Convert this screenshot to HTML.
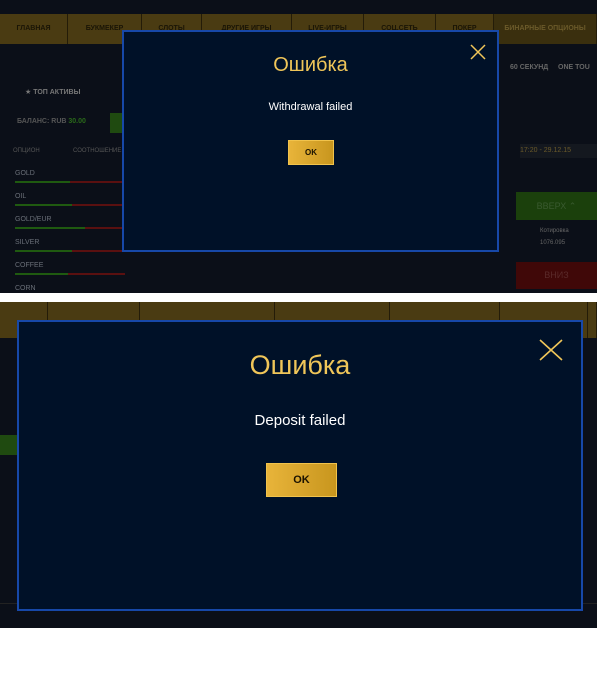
<!DOCTYPE html>
<html><head><meta charset="utf-8"><style>
*{margin:0;padding:0;box-sizing:border-box}
body{width:612px;height:673px;background:#fff;position:relative;overflow:hidden;font-family:"Liberation Sans","DejaVu Sans",sans-serif}
.shot{position:absolute;left:0;width:597px;background:#0b0f18;overflow:hidden}
.nav{position:absolute;left:0;right:0;background:#4a3b12;display:flex}
.nav div{border-right:1px solid #241c08;color:#1a1506;font-size:7px;font-weight:bold;text-align:center}
.abs{position:absolute}
.modal{position:absolute;background:#001128;border:2px solid #1748a8}
.title{position:absolute;left:0;right:0;text-align:center;color:#f0c659}
.msg{position:absolute;left:0;right:0;text-align:center;color:#fff}
.ok{position:absolute;background:linear-gradient(90deg,#e8b43a,#c8961e);border:1px solid #f1c34c;color:#1a1200;font-weight:bold;text-align:center}
.x{position:absolute}
.row{position:absolute;left:15px;width:110px;color:#6a6f78;font-size:7px}
</style></head><body>

<div class="shot" style="top:0;height:293px">
  <div class="nav" style="top:14px;height:30px">
    <div style="width:68px;line-height:30px">ГЛАВНАЯ</div>
    <div style="width:74px;line-height:30px">БУКМЕКЕР</div>
    <div style="width:60px;line-height:30px">СЛОТЫ</div>
    <div style="width:90px;line-height:30px">ДРУГИЕ ИГРЫ</div>
    <div style="width:72px;line-height:30px">LIVE-ИГРЫ</div>
    <div style="width:72px;line-height:30px">СОЦ.СЕТЬ</div>
    <div style="width:58px;line-height:30px">ПОКЕР</div>
    <div style="flex:1;line-height:30px;background:#3a2f0e;color:#6b5a2a">БИНАРНЫЕ ОПЦИОНЫ</div>
  </div>
  <div class="abs" style="left:25px;top:88px;color:#777;font-size:7px;font-weight:bold">★ ТОП АКТИВЫ</div>
  <div class="abs" style="left:17px;top:118px;color:#555;font-size:7px;font-weight:bold">БАЛАНС: RUB <span style="color:#2a6a1a">30.00</span></div>
  <div class="abs" style="left:110px;top:113px;width:15px;height:20px;background:#1f4a10"></div>
  <div class="abs" style="left:13px;top:148px;color:#555;font-size:6px">ОПЦИОН</div>
  <div class="abs" style="left:73px;top:148px;color:#555;font-size:6px">СООТНОШЕНИЕ, %</div>
  <div class="row" style="top:170px">GOLD<div style="position:absolute;top:11px;left:0;width:55px;height:2px;background:#1f5a10"></div><div style="position:absolute;top:11px;left:55px;width:55px;height:2px;background:#5a1010"></div></div>
  <div class="row" style="top:193px">OIL<div style="position:absolute;top:11px;left:0;width:57px;height:2px;background:#1f5a10"></div><div style="position:absolute;top:11px;left:57px;width:53px;height:2px;background:#5a1010"></div></div>
  <div class="row" style="top:216px">GOLD/EUR<div style="position:absolute;top:11px;left:0;width:70px;height:2px;background:#1f5a10"></div><div style="position:absolute;top:11px;left:70px;width:40px;height:2px;background:#5a1010"></div></div>
  <div class="row" style="top:239px">SILVER<div style="position:absolute;top:11px;left:0;width:57px;height:2px;background:#1f5a10"></div><div style="position:absolute;top:11px;left:57px;width:53px;height:2px;background:#5a1010"></div></div>
  <div class="row" style="top:262px">COFFEE<div style="position:absolute;top:11px;left:0;width:53px;height:2px;background:#1f5a10"></div><div style="position:absolute;top:11px;left:53px;width:57px;height:2px;background:#5a1010"></div></div>
  <div class="row" style="top:285px">CORN</div>
  <div class="abs" style="left:510px;top:64px;color:#666;font-size:7px;font-weight:bold">60 СЕКУНД &nbsp;&nbsp;&nbsp; ONE TOU</div>
  <div class="abs" style="left:520px;top:144px;width:77px;height:14px;background:#14181f;color:#6b5a2a;font-size:7px;line-height:14px">17:20 - 29.12.15</div>
  <div class="abs" style="left:516px;top:192px;width:81px;height:28px;background:#1b400c;color:#3a5a30;font-size:9px;line-height:28px;text-align:center">ВВЕРХ ⌃</div>
  <div class="abs" style="left:516px;top:262px;width:81px;height:27px;background:#400808;color:#5a2a2a;font-size:9px;line-height:27px;text-align:center">ВНИЗ</div>
  <div class="abs" style="left:540px;top:228px;color:#666;font-size:6px">Котировка<br><br>1076.095</div>

  <div class="modal" style="left:122px;top:30px;width:377px;height:222px">
    <div class="title" style="top:22px;font-size:20px">Ошибка</div>
    <div class="msg" style="top:69px;font-size:11px">Withdrawal failed</div>
    <div class="ok" style="left:164px;top:108px;width:46px;height:25px;line-height:23px;font-size:8px">OK</div>
    <svg class="x" style="left:346px;top:12px" width="16" height="16"><path d="M1 1L15 15M15 1L1 15" stroke="#f0c659" stroke-width="1.5"/></svg>
  </div>
</div>

<div class="shot" style="top:302px;height:326px">
  <div class="nav" style="top:0;height:36px">
    <div style="width:48px"></div><div style="width:92px"></div><div style="width:135px"></div><div style="width:115px"></div><div style="width:110px"></div><div style="width:88px"></div><div style="flex:1"></div>
  </div>
  <div class="abs" style="left:0;top:133px;width:17px;height:20px;background:#1f4a10"></div>
  <div class="abs" style="left:0;top:301px;width:597px;height:1px;background:#222"></div>
  <div class="modal" style="left:17px;top:18px;width:566px;height:291px">
    <div class="title" style="top:28px;font-size:27px">Ошибка</div>
    <div class="msg" style="top:90px;font-size:15px">Deposit failed</div>
    <div class="ok" style="left:247px;top:141px;width:71px;height:34px;line-height:32px;font-size:11px">OK</div>
    <svg class="x" style="left:520px;top:17px" width="24" height="22"><path d="M1 1L23 21M23 1L1 21" stroke="#f0c659" stroke-width="1.6"/></svg>
  </div>
</div>
</body></html>
